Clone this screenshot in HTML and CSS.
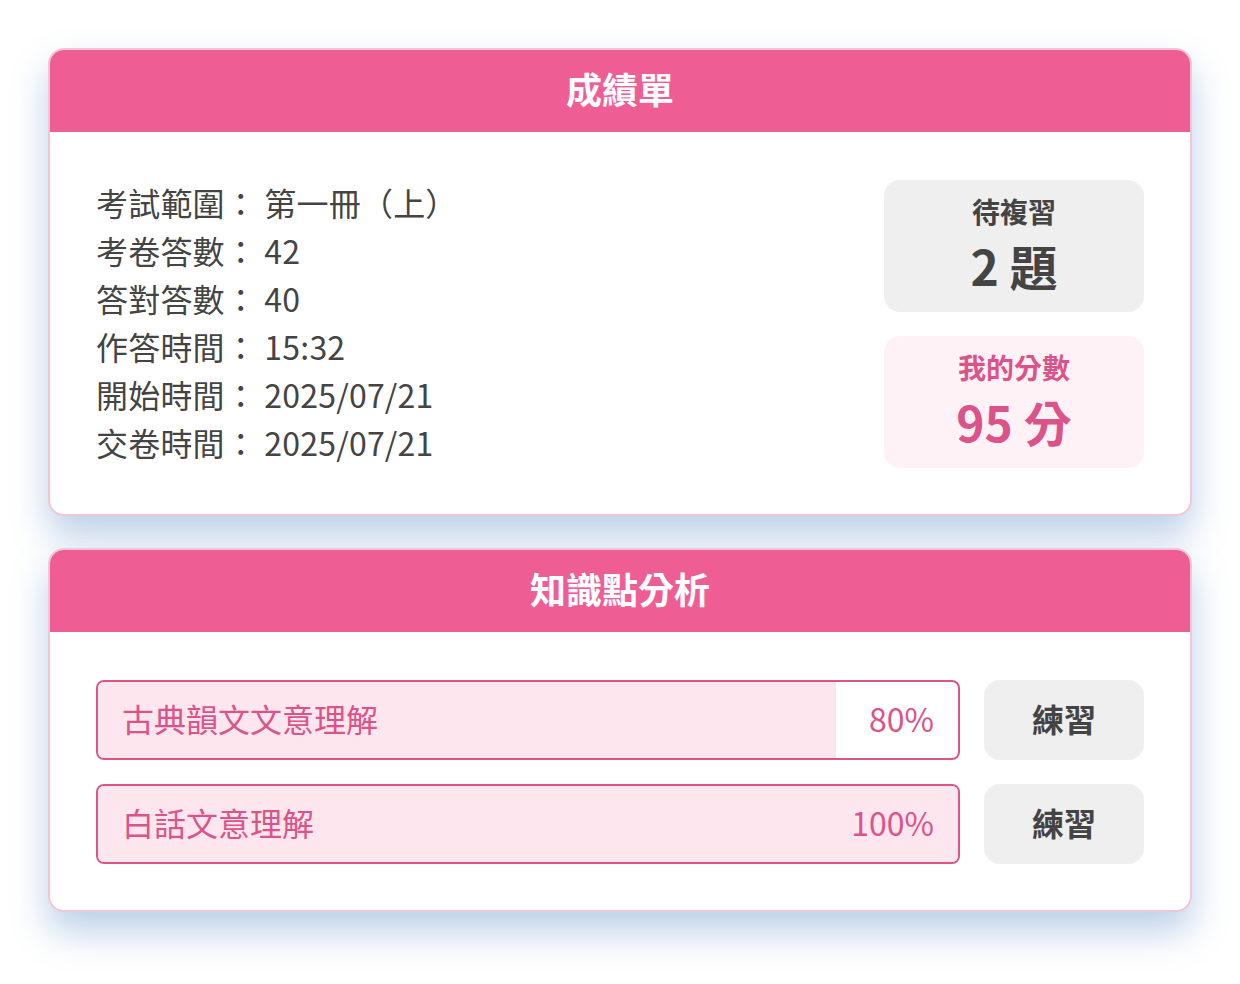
FILE: index.html
```html
<!DOCTYPE html>
<html lang="zh-Hant">
<head>
<meta charset="utf-8">
<title>成績單</title>
<link rel="stylesheet" href="styles.css">
</head>
<body>
<main class="page">
  <section class="card">
    <header class="card-head">成績單</header>
    <div class="card-body summary">
      <ul class="info">
        <li>考試範圍： 第一冊（上）</li>
        <li>考卷答數： 42</li>
        <li>答對答數： 40</li>
        <li>作答時間： 15:32</li>
        <li>開始時間： 2025/07/21</li>
        <li>交卷時間： 2025/07/21</li>
      </ul>
      <div class="stats">
        <div class="stat stat-gray">
          <div class="stat-label">待複習</div>
          <div class="stat-value">2 題</div>
        </div>
        <div class="stat stat-pink">
          <div class="stat-label">我的分數</div>
          <div class="stat-value">95 分</div>
        </div>
      </div>
    </div>
  </section>

  <section class="card">
    <header class="card-head">知識點分析</header>
    <div class="card-body rows">
      <div class="row">
        <div class="bar">
          <div class="bar-fill" style="width:85.8%"></div>
          <span class="bar-label">古典韻文文意理解</span>
          <span class="bar-pct">80%</span>
        </div>
        <button class="practice">練習</button>
      </div>
      <div class="row">
        <div class="bar">
          <div class="bar-fill" style="width:100%"></div>
          <span class="bar-label">白話文意理解</span>
          <span class="bar-pct">100%</span>
        </div>
        <button class="practice">練習</button>
      </div>
    </div>
  </section>
</main>
</body>
</html>
```
FILE: styles.css
```css
* { box-sizing: border-box; }
html, body { margin: 0; padding: 0; background: #ffffff; }
html { min-height: 100%; }
body {
  min-height: 100vh;
  font-family: "Noto Sans CJK TC", "Noto Sans", sans-serif;
  color: #444444;
}
.page {
  padding: 48px;
  display: flex;
  flex-direction: column;
  gap: 32px;
}
.card {
  background: #ffffff;
  border: 2px solid #f2c6d6;
  border-radius: 16px;
  overflow: hidden;
  box-shadow: 0 20px 36px rgba(96, 144, 200, 0.42);
}
.card-head {
  height: 82px;
  padding-bottom: 6px;
  background: #ee5e95;
  color: #ffffff;
  font-size: 36px;
  font-weight: 700;
  display: flex;
  align-items: center;
  justify-content: center;
  line-height: 1;
}
.card-body {
  padding: 48px 46px 46px 46px;
}
.summary {
  display: flex;
  justify-content: space-between;
  align-items: flex-start;
}
.info {
  list-style: none;
  margin: -2px 0 0 0;
  padding: 0;
  font-size: 32px;
  line-height: 48px;
  letter-spacing: 0.2px;
  color: #444444;
}
.stats {
  width: 260px;
  display: flex;
  flex-direction: column;
  gap: 24px;
}
.stat {
  height: 132px;
  padding-bottom: 8px;
  border-radius: 16px;
  display: flex;
  flex-direction: column;
  align-items: center;
  justify-content: center;
  gap: 6px;
}
.stat-label {
  font-size: 28px;
  font-weight: 700;
  line-height: 40px;
}
.stat-value {
  font-size: 48px;
  font-weight: 700;
  line-height: 56px;
}
.stat-gray { background: #efefef; color: #444444; }
.stat-pink { background: #fff2f6; color: #dc5389; }
.rows {
  display: flex;
  flex-direction: column;
  gap: 24px;
}
.row {
  display: flex;
  gap: 24px;
  height: 80px;
}
.bar {
  flex: 1;
  position: relative;
  border: 2px solid #dc5489;
  border-radius: 8px;
  overflow: hidden;
  display: flex;
  align-items: center;
  justify-content: space-between;
  padding: 0 24px 5px 24px;
  color: #dc5389;
  font-size: 32px;
  background: #ffffff;
}
.bar-fill {
  position: absolute;
  left: 0;
  top: 0;
  bottom: 0;
  background: #fde6ee;
}
.bar-label, .bar-pct { position: relative; }
.practice {
  width: 160px;
  border: none;
  border-radius: 16px;
  background: #efefef;
  color: #444444;
  font-family: inherit;
  font-size: 32px;
  font-weight: 700;
  padding: 0 0 4px 0;
  cursor: pointer;
}
```
